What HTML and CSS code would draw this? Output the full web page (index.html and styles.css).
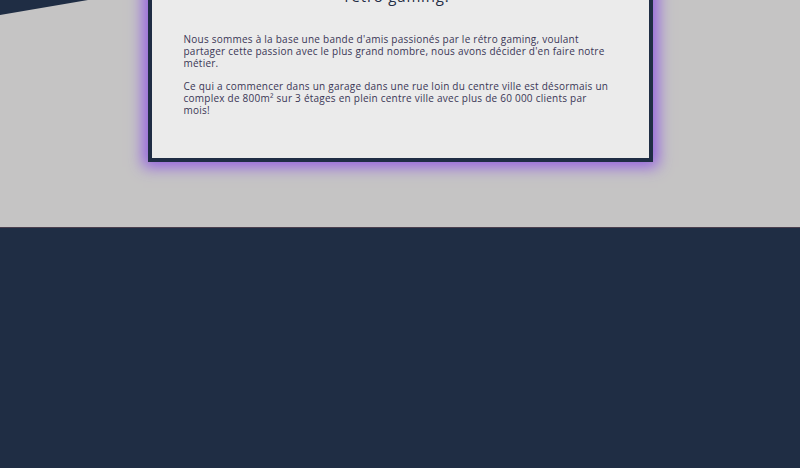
FILE: index.html
```html
<!DOCTYPE html>
<html lang="fr">
<head>
<meta charset="utf-8">
<title>À propos</title>
<link rel="stylesheet" href="styles.css">
</head>
<body>
<section class="about">
  <div class="card">
    <h2 class="card-title">Bienvenue chez les passionnés du<br>rétro gaming.</h2>
    <p class="card-text">Nous sommes à la base une bande d'amis passionés par le rétro gaming, voulant partager cette passion avec le plus grand nombre, nous avons décider d'en faire notre métier.</p>
    <p class="card-text">Ce qui a commencer dans un garage dans une rue loin du centre ville est désormais un complex de 800m² sur 3 étages en plein centre ville avec plus de 60 000 clients par mois!</p>
  </div>
</section>
<footer class="footer"></footer>
</body>
</html>
```
FILE: styles.css
```css
html, body {
  margin: 0;
  padding: 0;
}
body {
  background: #1f2d44;
  font-family: "Open Sans", "DejaVu Sans", sans-serif;
  height: 468px;
  overflow: hidden;
}
.about {
  height: 227px;
  background-color: #c5c4c4;
  display: flex;
  justify-content: center;
  position: relative;
  overflow: hidden;
}
.about::before {
  content: "";
  position: absolute;
  left: 0;
  top: 0;
  width: 88px;
  height: 15px;
  background: #1f2d44;
  clip-path: polygon(0 0, 100% 0, 0 100%);
}
.card {
  box-sizing: border-box;
  width: 505px;
  margin-top: -56px;
  height: 218px;
  background: #ebebeb;
  border: 4px solid #1f2d44;
  box-shadow: 0 0 14px 5px #9460e0;
  padding: 0 38px 0 32px;
  position: relative;
  z-index: 1;
}
.card-title {
  margin: 20px 0 0;
  text-align: center;
  font-size: 15px;
  line-height: 19px;
  font-weight: 400;
  color: #1f2d44;
  letter-spacing: 0.8px;
}
.card-text {
  margin: 27px 0 0;
  font-size: 10px;
  line-height: 12px;
  color: #3a3656;
  letter-spacing: 0.24px;
}
.card-text + .card-text {
  margin-top: 11px;
}
.footer {
  height: 241px;
  background: #1f2d44;
  border-top: 1px solid #4a3f4e;
}
```
